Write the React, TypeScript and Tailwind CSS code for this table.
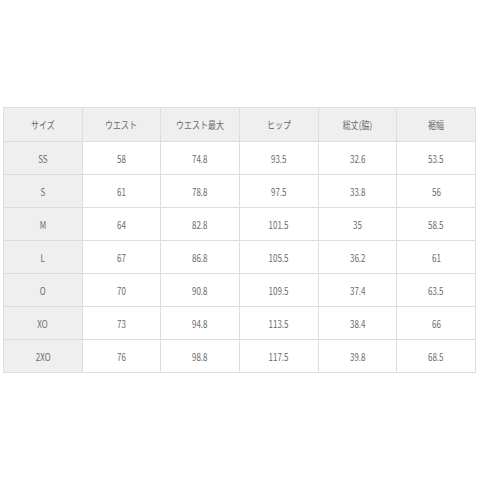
const headers = ["サイズ", "ウエスト", "ウエスト最大", "ヒップ", "総丈(脇)", "裾幅"];

const rows: string[][] = [
  ["SS", "58", "74.8", "93.5", "32.6", "53.5"],
  ["S", "61", "78.8", "97.5", "33.8", "56"],
  ["M", "64", "82.8", "101.5", "35", "58.5"],
  ["L", "67", "86.8", "105.5", "36.2", "61"],
  ["O", "70", "90.8", "109.5", "37.4", "63.5"],
  ["XO", "73", "94.8", "113.5", "38.4", "66"],
  ["2XO", "76", "98.8", "117.5", "39.8", "68.5"],
];

// the source image is squeezed horizontally, so glyphs are narrowed a bit
function Txt({ children }: { children: string }) {
  return <span className="inline-block scale-x-[0.8] whitespace-nowrap">{children}</span>;
}

export default function App() {
  return (
    <div
      className="w-[480px] h-[480px] bg-white pt-[107px] pl-[3px]"
      style={{ fontFamily: '"Noto Sans CJK JP", "Noto Sans", sans-serif' }}
    >
      <table className="w-[473px] table-fixed border-collapse text-[10px] text-[#6a6a6a]">
        <thead>
          <tr className="h-[34px] bg-[#efefef]">
            {headers.map((h) => (
              <th key={h} className="border border-[#dedede] font-normal text-center">
                <Txt>{h}</Txt>
              </th>
            ))}
          </tr>
        </thead>
        <tbody>
          {rows.map((r) => (
            <tr key={r[0]} className="h-[33px]">
              {r.map((c, i) => (
                <td
                  key={i}
                  className={
                    i === 0
                      ? "border border-[#dedede] bg-[#efefef] text-center"
                      : "border border-[#dedede] text-center"
                  }
                >
                  <Txt>{c}</Txt>
                </td>
              ))}
            </tr>
          ))}
        </tbody>
      </table>
    </div>
  );
}
